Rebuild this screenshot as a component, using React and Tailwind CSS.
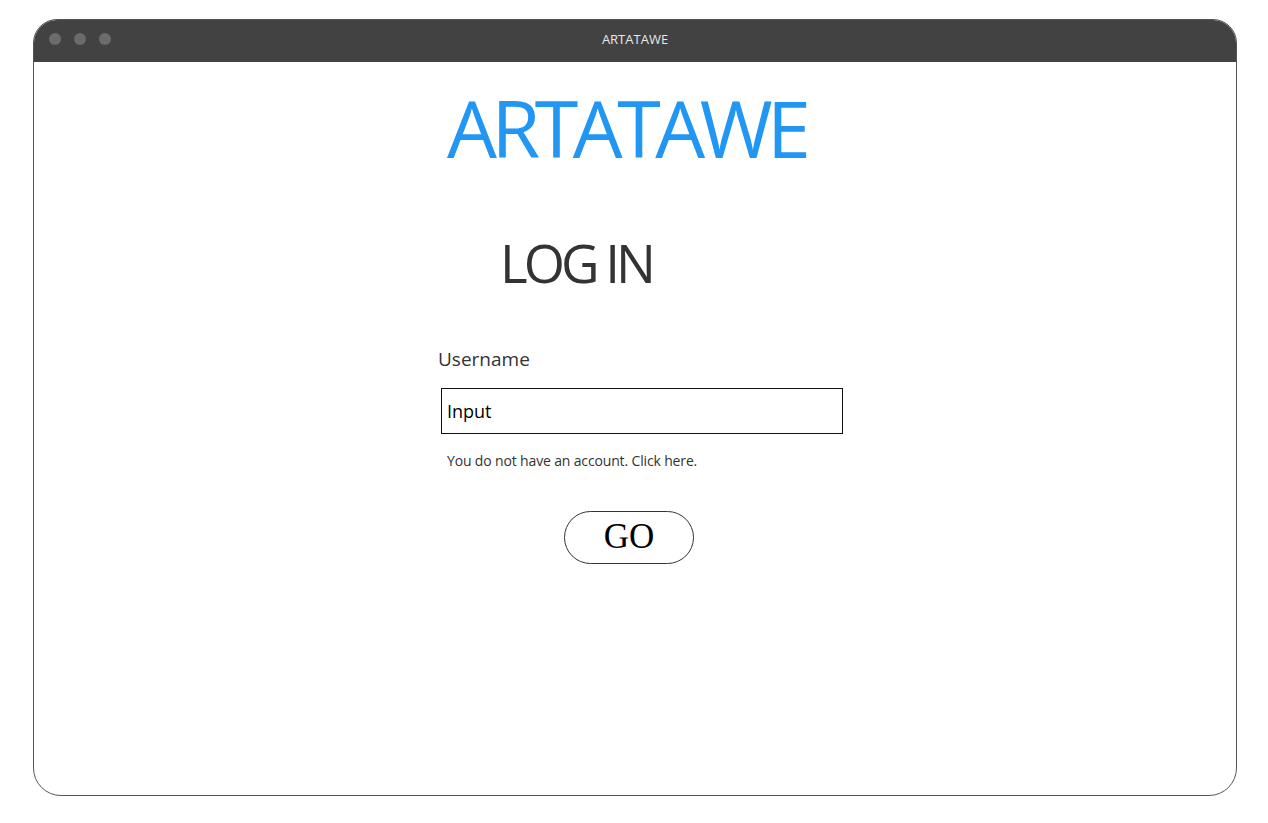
import React from 'react';

const sans = { fontFamily: '"Open Sans", "Noto Sans", sans-serif' };

export default function App() {
  return (
    <div className="w-[1268px] h-[823px] bg-white pt-[19px] pl-[33px]" style={sans}>
      {/* window frame */}
      <div className="w-[1204px] h-[777px] rounded-t-[24px] rounded-b-[28px] border border-[#555] overflow-hidden flex flex-col bg-white">
        {/* title bar */}
        <div className="h-[42px] shrink-0 bg-[#424242] flex items-center relative">
          <div className="flex items-center gap-[13px] pl-[15px] -mt-[4px]">
            <span className="w-[12px] h-[12px] rounded-full bg-[#6b6b6b]" />
            <span className="w-[12px] h-[12px] rounded-full bg-[#6b6b6b]" />
            <span className="w-[12px] h-[12px] rounded-full bg-[#6b6b6b]" />
          </div>
          <div className="absolute inset-0 flex items-center justify-center text-[13px] text-[#e8e8e8] -mt-[2px]">
            ARTATAWE
          </div>
        </div>

        {/* content */}
        <div className="flex flex-col">
          <div className="pl-[413px] pt-[16px] text-[79px] leading-[100px] text-[#2196f3] tracking-[-5.5px]">
            ARTATAWE
          </div>

          <div className="pl-[466px] pt-[50px] text-[53px] leading-[70px] text-[#333] tracking-[-4px]">
            LOG IN
          </div>

          <div className="pl-[404px] pt-[48px] w-[820px]">
            <div className="text-[19px] leading-[26px] text-[#333]">Username</div>
            <div className="mt-[16px] ml-[3px] w-[402px] h-[46px] border border-[#111] flex items-center px-[5px] text-[18px] text-black">
              Input
            </div>
            <div className="mt-[18px] ml-[9px] text-[14px] leading-[18px] text-[#333] tracking-[-0.15px]">
              You do not have an account. Click here.
            </div>
            <div className="mt-[41px] ml-[126px] w-[130px] h-[53px] rounded-full border border-[#333] flex items-center justify-center text-[35px] text-black" style={{ fontFamily: '"Liberation Serif", serif' }}>
              GO
            </div>
          </div>
        </div>
      </div>
    </div>
  );
}
